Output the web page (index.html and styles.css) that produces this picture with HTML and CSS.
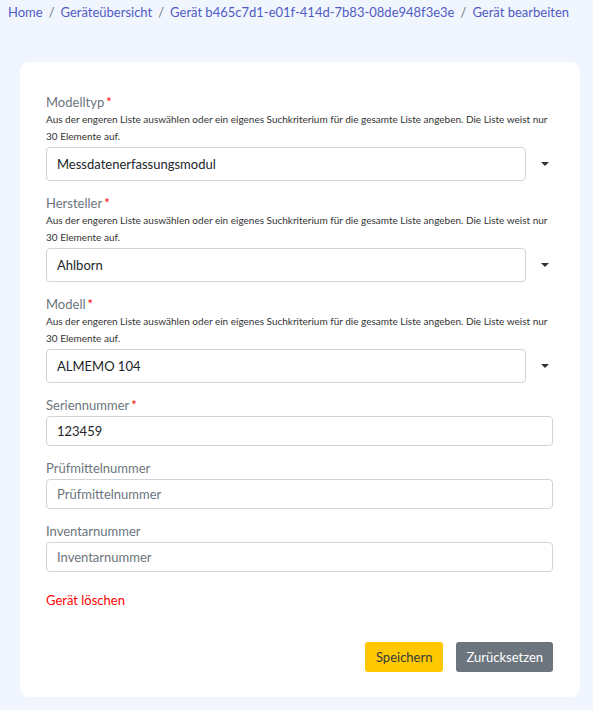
FILE: index.html
```html
<!DOCTYPE html>
<html lang="de">
<head>
    <meta charset="UTF-8">
    <meta name="viewport" content="width=device-width, initial-scale=1.0">
    <title>Gerät bearbeiten</title>
    <link rel="stylesheet" href="styles.css">
</head>
<body>
    <nav class="breadcrumb">
        <a href="#">Home</a>
        <span class="sep">/</span>
        <a href="#">Geräteübersicht</a>
        <span class="sep">/</span>
        <a href="#">Gerät b465c7d1-e01f-414d-7b83-08de948f3e3e</a>
        <span class="sep">/</span>
        <a href="#">Gerät bearbeiten</a>
    </nav>

    <div class="card">
        <form>
            <div class="field">
                <label>Modelltyp<span class="req">*</span></label>
                <p class="help">Aus der engeren Liste auswählen oder ein eigenes Suchkriterium für die gesamte Liste angeben. Die Liste weist nur 30 Elemente auf.</p>
                <div class="select-row">
                    <input type="text" class="input tall" value="Messdatenerfassungsmodul">
                    <span class="caret"></span>
                </div>
            </div>
            <div class="field">
                <label>Hersteller<span class="req">*</span></label>
                <p class="help">Aus der engeren Liste auswählen oder ein eigenes Suchkriterium für die gesamte Liste angeben. Die Liste weist nur 30 Elemente auf.</p>
                <div class="select-row">
                    <input type="text" class="input tall" value="Ahlborn">
                    <span class="caret"></span>
                </div>
            </div>
            <div class="field">
                <label>Modell<span class="req">*</span></label>
                <p class="help">Aus der engeren Liste auswählen oder ein eigenes Suchkriterium für die gesamte Liste angeben. Die Liste weist nur 30 Elemente auf.</p>
                <div class="select-row">
                    <input type="text" class="input tall" value="ALMEMO 104">
                    <span class="caret"></span>
                </div>
            </div>
            <div class="field">
                <label>Seriennummer<span class="req">*</span></label>
                <input type="text" class="input" value="123459">
            </div>
            <div class="field">
                <label>Prüfmittelnummer</label>
                <input type="text" class="input" placeholder="Prüfmittelnummer">
            </div>
            <div class="field">
                <label>Inventarnummer</label>
                <input type="text" class="input" placeholder="Inventarnummer">
            </div>

            <a href="#" class="delete">Gerät löschen</a>

            <div class="actions">
                <button type="button" class="btn btn-save">Speichern</button>
                <button type="reset" class="btn btn-reset">Zurücksetzen</button>
            </div>
        </form>
    </div>
</body>
</html>
```

FILE: styles.css
```css
* {
    margin: 0;
    padding: 0;
    box-sizing: border-box;
    font-family: Lato, "Noto Sans", sans-serif;
}
body {
    background-color: #f1f6fe;
    color: #212529;
}
.breadcrumb {
    display: flex;
    gap: 6px;
    padding: 4px 8px;
    font-size: 13px;
    line-height: 17px;
    height: 62px;
}
.breadcrumb a {
    color: #4f5bc4;
    text-decoration: none;
}
.breadcrumb .sep {
    color: #6c757d;
}
.card {
    width: 560px;
    margin-left: 20px;
    background-color: white;
    border-radius: 9px;
    padding: 32px 27px 25px 26px;
}
.field {
    margin-bottom: 14px;
}
label {
    display: block;
    font-size: 13px;
    line-height: 16px;
    color: #6c757d;
    margin-bottom: 3px;
}
.req {
    color: #ff0000;
    margin-left: 2px;
}
.help {
    font-size: 10px;
    line-height: 17px;
    color: #333;
    margin-top: -2px;
    margin-bottom: 2px;
}
.input {
    display: block;
    width: 100%;
    height: 30px;
    padding: 0 10px;
    font-size: 13px;
    color: #212529;
    border: 1px solid #ced4da;
    border-radius: 4px;
    background: white;
}
.input::placeholder {
    color: #6c757d;
}
.input.tall {
    height: 34px;
}
.select-row {
    display: flex;
    align-items: center;
}
.caret {
    flex: 0 0 27px;
    display: flex;
    justify-content: center;
}
.caret::before {
    content: "";
    border-left: 4px solid transparent;
    border-right: 4px solid transparent;
    border-top: 4px solid #333;
    margin-left: 11px;
}
.delete {
    display: block;
    color: #ff0000;
    font-size: 13px;
    line-height: 16px;
    text-decoration: none;
    margin-top: 20px;
}
.actions {
    display: flex;
    justify-content: flex-end;
    gap: 13px;
    margin-top: 34px;
}
.btn {
    height: 30px;
    border: none;
    border-radius: 3px;
    font-size: 13px;
    cursor: pointer;
}
.btn-save {
    padding: 0 11px;
    background-color: #ffc800;
    color: #343a40;
}
.btn-reset {
    padding: 0 10px;
    background-color: #6c757d;
    color: white;
}
```
